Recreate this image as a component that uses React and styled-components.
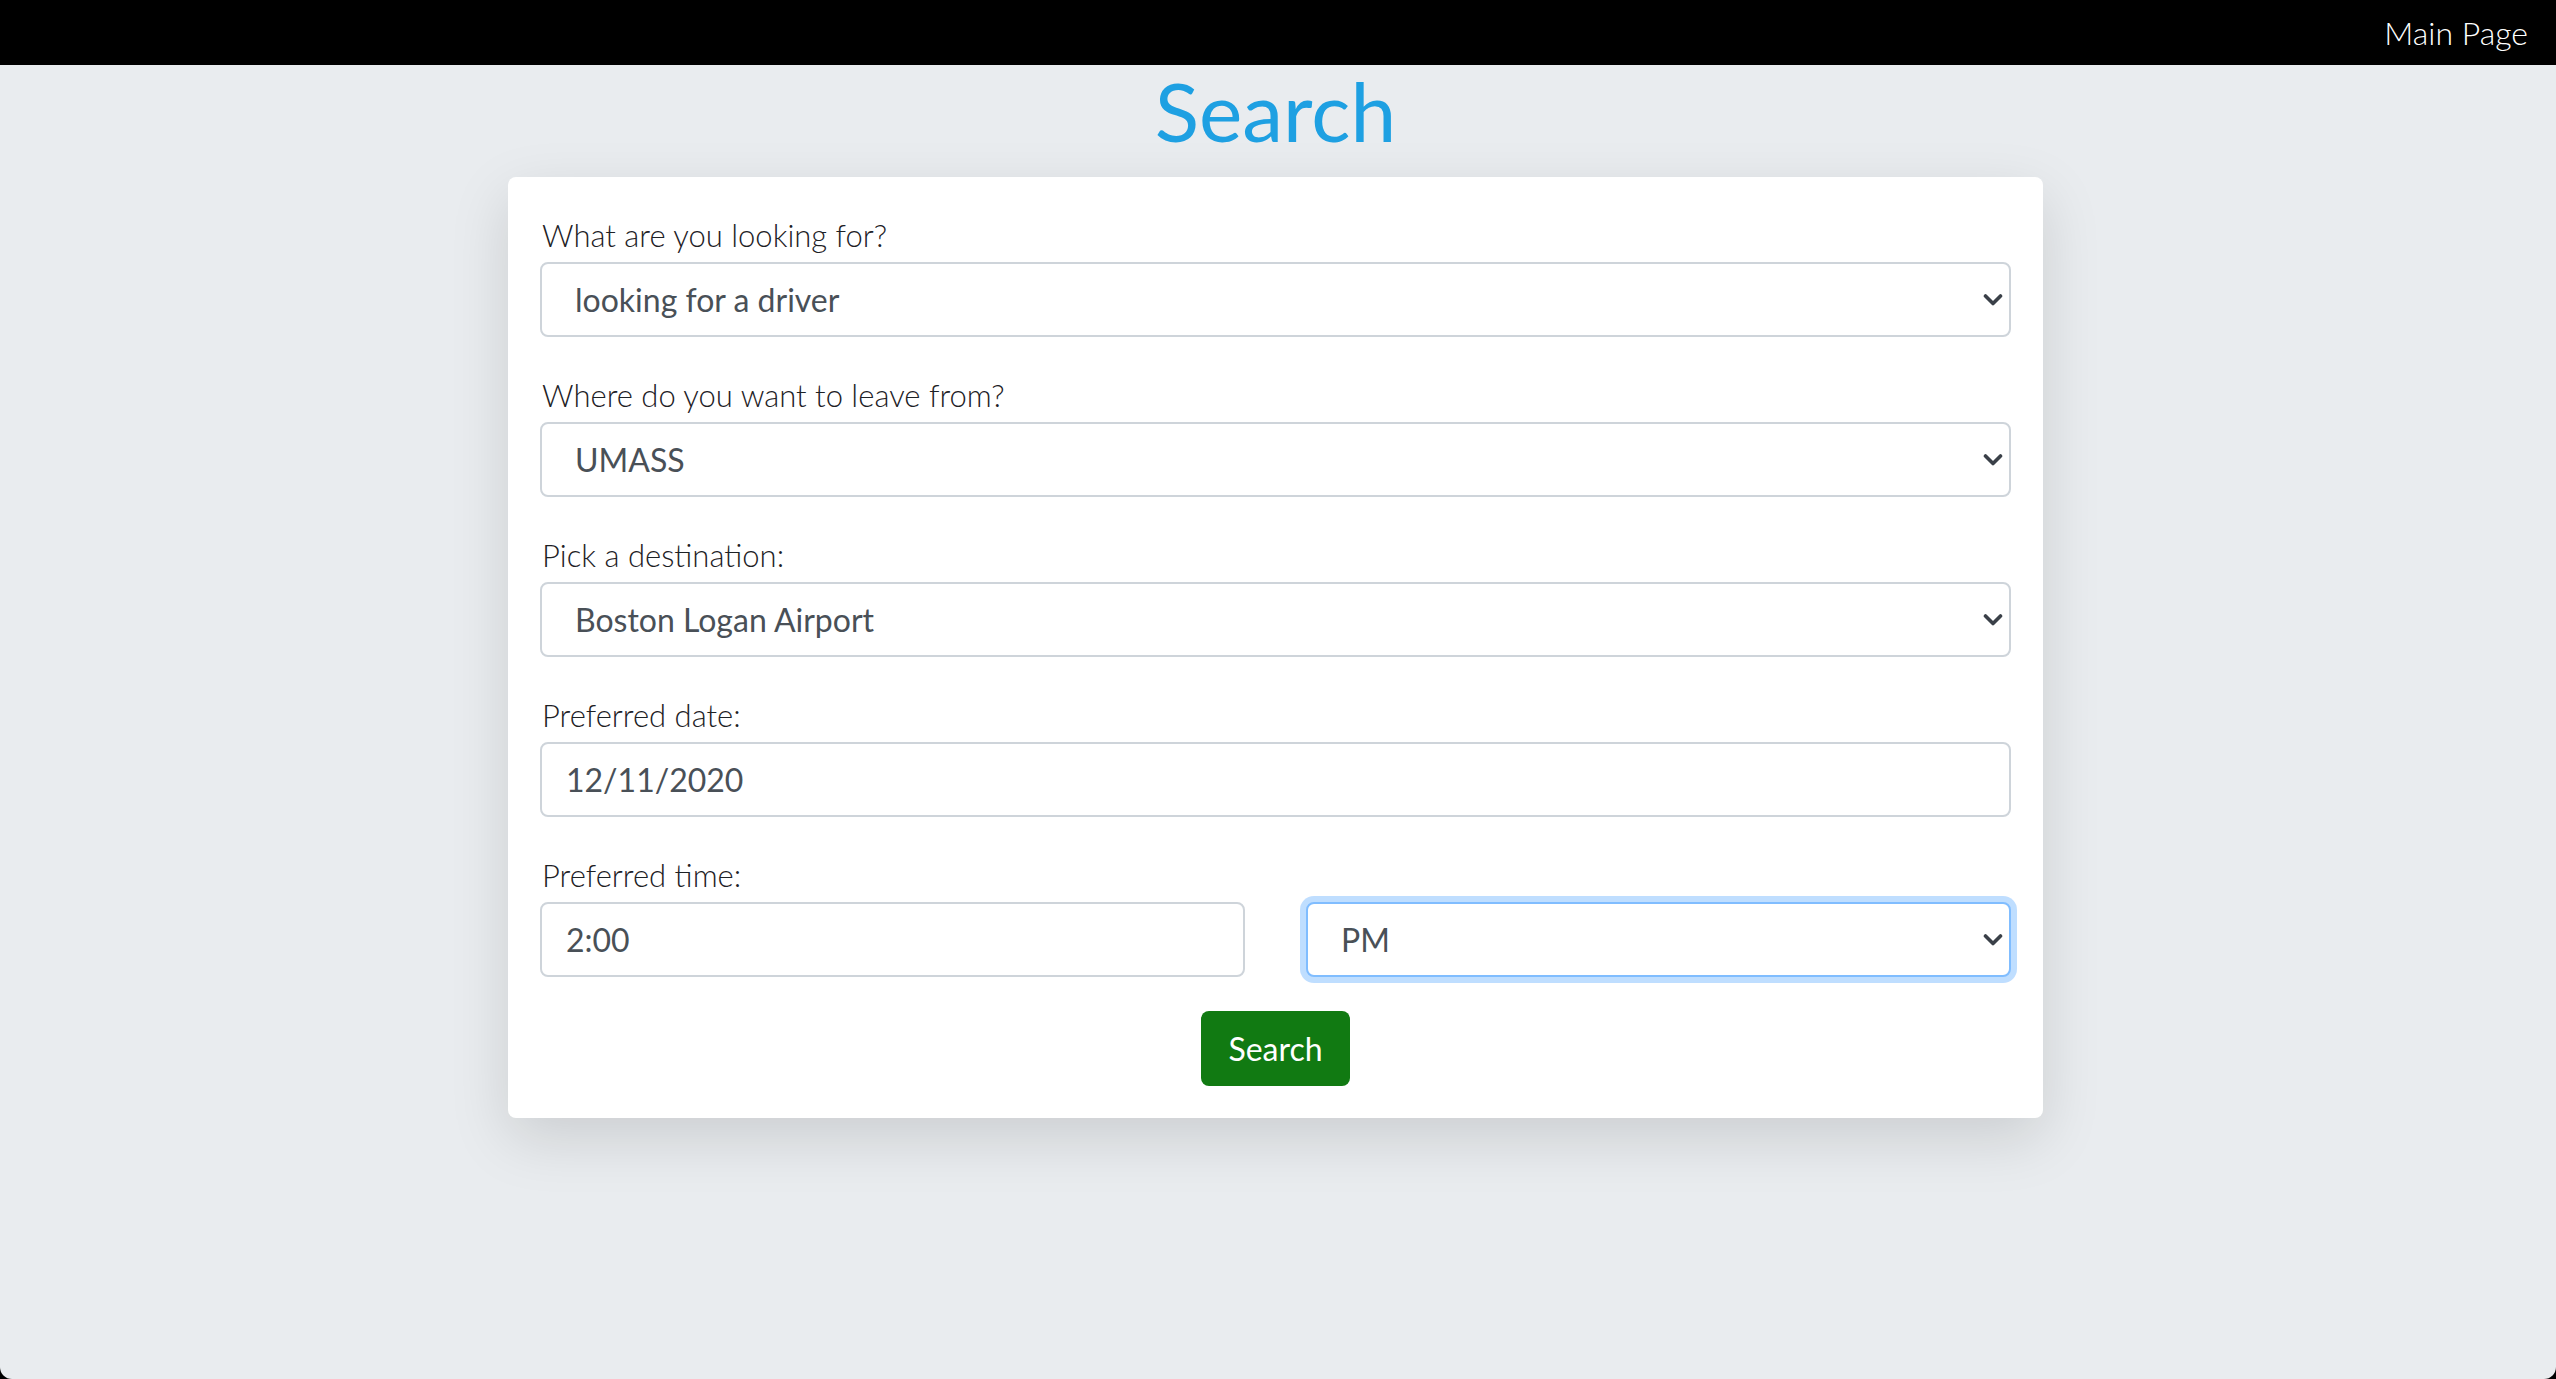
import React from "react";
import styled, { createGlobalStyle, css } from "styled-components";

const GlobalStyle = createGlobalStyle`
  html, body {
    margin: 0;
    padding: 0;
    background: #000;
  }
  body {
    font-family: Lato, "Noto Sans", sans-serif;
  }
  * {
    box-sizing: border-box;
  }
`;

const Page = styled.div`
  min-height: 100vh;
  background: #e9ecef;
  border-radius: 0 0 12px 12px;
  overflow: hidden;
`;

const NavBar = styled.nav`
  height: 65px;
  background: #000;
  display: flex;
  align-items: center;
  justify-content: flex-end;
  padding: 0 28px;
`;

const NavLink = styled.a`
  color: #fff;
  font-size: 32px;
  font-weight: 300;
  line-height: 1;
  text-decoration: none;
`;

const Main = styled.main`
  padding: 0 5px 80px 0;
`;

const Heading = styled.h1`
  margin: 0 0 22px;
  text-align: center;
  font-size: 82px;
  font-weight: 400;
  line-height: 1.1;
  color: #1ea0e2;
`;

const Card = styled.form`
  width: 1535px;
  margin: 0 auto;
  background: #fff;
  border-radius: 8px;
  padding: 34px 32px 32px;
  box-shadow: 0 20px 60px rgba(0, 0, 0, 0.13);
`;

const Group = styled.div`
  margin-bottom: 34px;
`;

const Label = styled.label`
  display: block;
  font-size: 31px;
  font-weight: 300;
  line-height: 48px;
  color: #1d2125;
  margin-bottom: 3px;
  padding-left: 2px;
`;

const control = css`
  display: block;
  width: 100%;
  height: 75px;
  border: 2px solid #ced4da;
  border-radius: 8px;
  background: #fff;
  font-family: Lato, "Noto Sans", sans-serif;
  font-size: 32px;
  font-weight: 400;
  color: #495057;
  outline: none;
`;

const Input = styled.input`
  ${control}
  padding: 0 24px;
`;

const SelectWrap = styled.div`
  position: relative;
`;

const Select = styled.select`
  ${control}
  appearance: none;
  padding: 0 50px 0 33px;

  ${(props) =>
    props.$focused &&
    css`
      border-color: #80bdff;
      box-shadow: 0 0 0 6px rgba(0, 123, 255, 0.25);
    `}
`;

const Chevron = styled.svg`
  position: absolute;
  right: 8px;
  top: 50%;
  transform: translateY(-50%);
  pointer-events: none;
`;

const TimeRow = styled.div`
  display: grid;
  grid-template-columns: 1fr 1fr;
  column-gap: 61px;
`;

const Actions = styled.div`
  display: flex;
  justify-content: center;
`;

const SearchButton = styled.button`
  height: 75px;
  padding: 0 27px;
  border: none;
  border-radius: 8px;
  background: #117a12;
  color: #fff;
  font-family: Lato, "Noto Sans", sans-serif;
  font-size: 32px;
  cursor: pointer;
`;

const Dropdown = ({ value, options, focused }) => (
  <SelectWrap>
    <Select defaultValue={value} $focused={focused}>
      {options.map((o) => (
        <option key={o}>{o}</option>
      ))}
    </Select>
    <Chevron width="20" height="14" viewBox="0 0 20 14">
      <path
        d="M2.5 3 L10 10.5 L17.5 3"
        fill="none"
        stroke="#3a4048"
        strokeWidth="3.6"
        strokeLinecap="round"
        strokeLinejoin="round"
      />
    </Chevron>
  </SelectWrap>
);

const App = () => {
  return (
    <Page>
      <GlobalStyle />
      <NavBar>
        <NavLink href="#">Main Page</NavLink>
      </NavBar>
      <Main>
        <Heading>Search</Heading>
        <Card onSubmit={(e) => e.preventDefault()}>
          <Group>
            <Label>What are you looking for?</Label>
            <Dropdown
              value="looking for a driver"
              options={["looking for a driver", "looking for passengers"]}
            />
          </Group>
          <Group>
            <Label>Where do you want to leave from?</Label>
            <Dropdown value="UMASS" options={["UMASS", "Boston Logan Airport"]} />
          </Group>
          <Group>
            <Label>Pick a destination:</Label>
            <Dropdown
              value="Boston Logan Airport"
              options={["UMASS", "Boston Logan Airport"]}
            />
          </Group>
          <Group>
            <Label>Preferred date:</Label>
            <Input type="text" defaultValue="12/11/2020" />
          </Group>
          <Group>
            <Label>Preferred time:</Label>
            <TimeRow>
              <Input type="text" defaultValue="2:00" />
              <Dropdown value="PM" options={["AM", "PM"]} focused />
            </TimeRow>
          </Group>
          <Actions>
            <SearchButton type="submit">Search</SearchButton>
          </Actions>
        </Card>
      </Main>
    </Page>
  );
};

export default App;
